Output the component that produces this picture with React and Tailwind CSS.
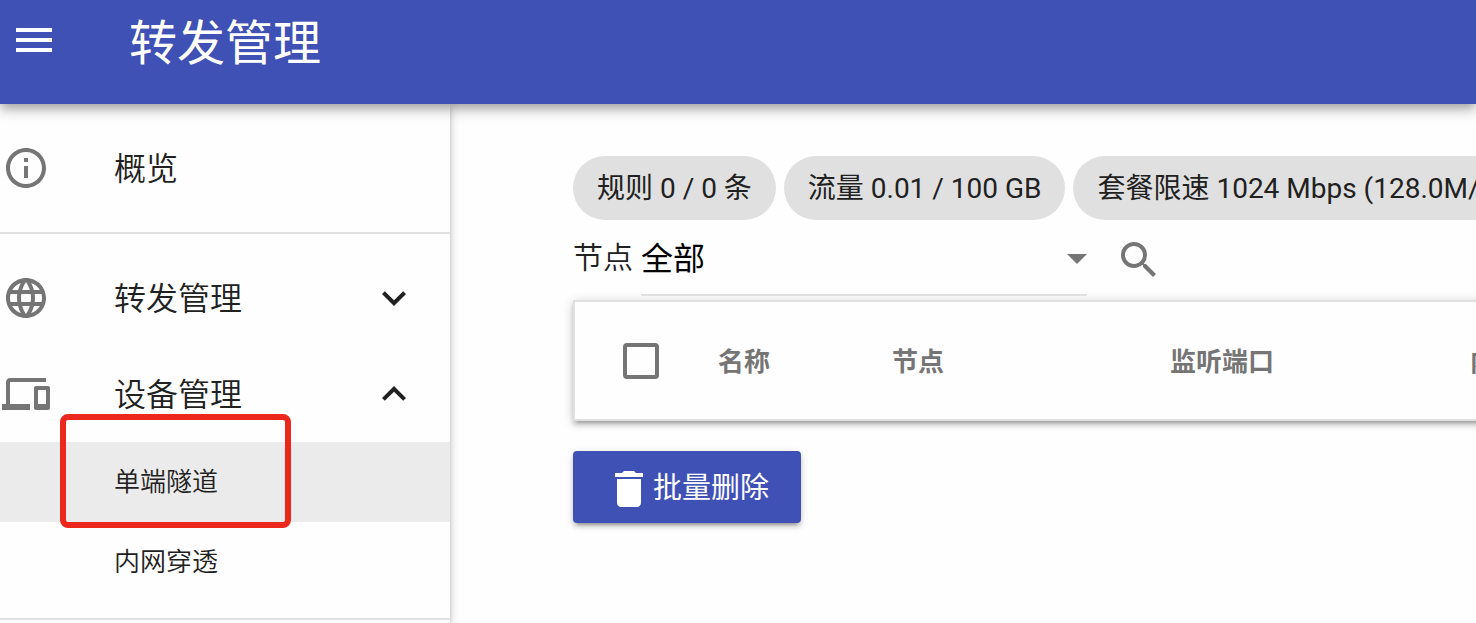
import React, { useState } from "react";
import {
  MdDelete,
  MdDevices,
  MdExpandLess,
  MdExpandMore,
  MdInfoOutline,
  MdLanguage,
  MdMenu,
  MdArrowDropDown,
  MdSearch,
} from "react-icons/md";

const chips = [
  "规则 0 / 0 条",
  "流量 0.01 / 100 GB",
  "套餐限速 1024 Mbps (128.0M/s)",
];

const columns = [
  { title: "名称", width: "w-[174px]" },
  { title: "节点", width: "w-[278px]" },
  { title: "监听端口", width: "w-[300px]" },
  { title: "内网地址", width: "w-[300px]" },
];

const NavButton = ({ icon: Icon, label, open, onClick }) => (
  <button
    onClick={onClick}
    className="flex h-24 w-full items-center pl-0.5 pr-8 text-left"
  >
    <Icon className="size-12 shrink-0 text-[#757575]" />
    <span className="ml-16 flex-1 pt-0.5 text-[32px] leading-12">{label}</span>
    {open === true && <MdExpandLess className="size-12" />}
    {open === false && <MdExpandMore className="size-12" />}
  </button>
);

const SubLink = ({ label, selected }) => (
  <li className="relative">
    <a
      href="#"
      className={`flex h-20 items-center pl-[114px] text-[26px] ${selected ? "bg-[#ebebeb]" : ""}`}
    >
      {label}
    </a>
    {selected && (
      <span className="pointer-events-none absolute -top-7 -bottom-1.5 left-[60px] w-[231px] rounded-lg border-6 border-[#ec281c]" />
    )}
  </li>
);

const App = () => {
  const [forwardOpen, setForwardOpen] = useState(false);
  const [deviceOpen, setDeviceOpen] = useState(true);

  return (
    <div className="flex min-h-screen flex-col overflow-hidden bg-[#fefefe] font-['Roboto','Noto_Sans_CJK_SC',sans-serif] text-[#212121]">
      <header className="relative z-20 flex items-center bg-[#3f51b5] pt-4 pb-10 pl-2.5 text-white shadow-[0_4px_8px_-2px_rgba(0,0,0,0.2),0_8px_10px_0_rgba(0,0,0,0.14),0_2px_20px_0_rgba(0,0,0,0.12)]">
        <button aria-label="菜单">
          <MdMenu className="size-12" />
        </button>
        <h1 className="ml-[71px] h-12 pt-1 text-5xl leading-12">转发管理</h1>
      </header>

      <div className="flex flex-1">
        <nav className="z-10 w-[450px] shrink-0 bg-[#fefefe] font-[350] shadow-[0_2px_10px_0_rgba(0,0,0,0.2),0_4px_4px_0_rgba(0,0,0,0.14),0_6px_2px_-4px_rgba(0,0,0,0.12)]">
          <div className="border-b-2 border-[#e0e0e0] py-4">
            <NavButton icon={MdInfoOutline} label="概览" />
          </div>
          <div className="border-b-2 border-[#e0e0e0] py-4">
            <NavButton
              icon={MdLanguage}
              label="转发管理"
              open={forwardOpen}
              onClick={() => setForwardOpen(!forwardOpen)}
            />
            <NavButton
              icon={MdDevices}
              label="设备管理"
              open={deviceOpen}
              onClick={() => setDeviceOpen(!deviceOpen)}
            />
            {deviceOpen && (
              <ul>
                <SubLink label="单端隧道" selected />
                <SubLink label="内网穿透" />
              </ul>
            )}
          </div>
        </nav>

        <main className="min-w-0 flex-1 overflow-hidden pt-[52px] pl-[123px]">
          {/* Quota */}
          <div className="flex gap-2">
            {chips.map((chip) => (
              <span
                key={chip}
                className="flex h-16 shrink-0 items-center rounded-full bg-[#e0e0e0] px-6 pt-0.5 text-[28px] whitespace-nowrap"
              >
                {chip}
              </span>
            ))}
          </div>

          {/* Filter */}
          <div className="flex h-20 items-start">
            <label
              htmlFor="node"
              className="mr-2 text-[30px] leading-[76px] font-[350]"
            >
              节点
            </label>
            <div className="relative w-[446px] border-b-2 border-[#e0e0e0] pt-1">
              <select
                id="node"
                className="h-[70px] w-full appearance-none bg-transparent pr-12 text-[32px] text-black outline-none"
              >
                <option>全部</option>
              </select>
              <MdArrowDropDown className="pointer-events-none absolute top-3.5 -right-3.5 size-12 text-[#757575]" />
            </div>
            <button
              aria-label="搜索"
              className="ml-7 self-center text-[#757575]"
            >
              <MdSearch className="size-12" />
            </button>
          </div>

          {/* Rules */}
          <div className="w-[1300px] border-2 border-[#e0e0e0] bg-[#fefefe] shadow-[0_2px_10px_0_rgba(0,0,0,0.2),0_4px_4px_0_rgba(0,0,0,0.14),0_6px_2px_-4px_rgba(0,0,0,0.12)]">
            <table className="w-full table-fixed">
              <thead>
                <tr className="h-[117px] text-left text-[26px] text-[#757575]">
                  <th className="w-[143px] pl-12">
                    <input
                      type="checkbox"
                      aria-label="全选"
                      className="block size-9 appearance-none rounded-sm border-4 border-[#757575] checked:bg-[#757575]"
                    />
                  </th>
                  {columns.map((col) => (
                    <th
                      key={col.title}
                      className={`${col.width} pt-1 font-bold`}
                    >
                      {col.title}
                    </th>
                  ))}
                  <th />
                </tr>
              </thead>
            </table>
          </div>

          <button className="mt-[30px] flex h-[72px] items-center rounded-sm bg-[#3f51b5] px-8 pt-1 text-[29px] text-white shadow-[0_6px_2px_-4px_rgba(0,0,0,0.2),0_4px_4px_0_rgba(0,0,0,0.14),0_2px_10px_0_rgba(0,0,0,0.12)]">
            <MdDelete className="size-12" />
            批量删除
          </button>
        </main>
      </div>
    </div>
  );
};

export default App;
